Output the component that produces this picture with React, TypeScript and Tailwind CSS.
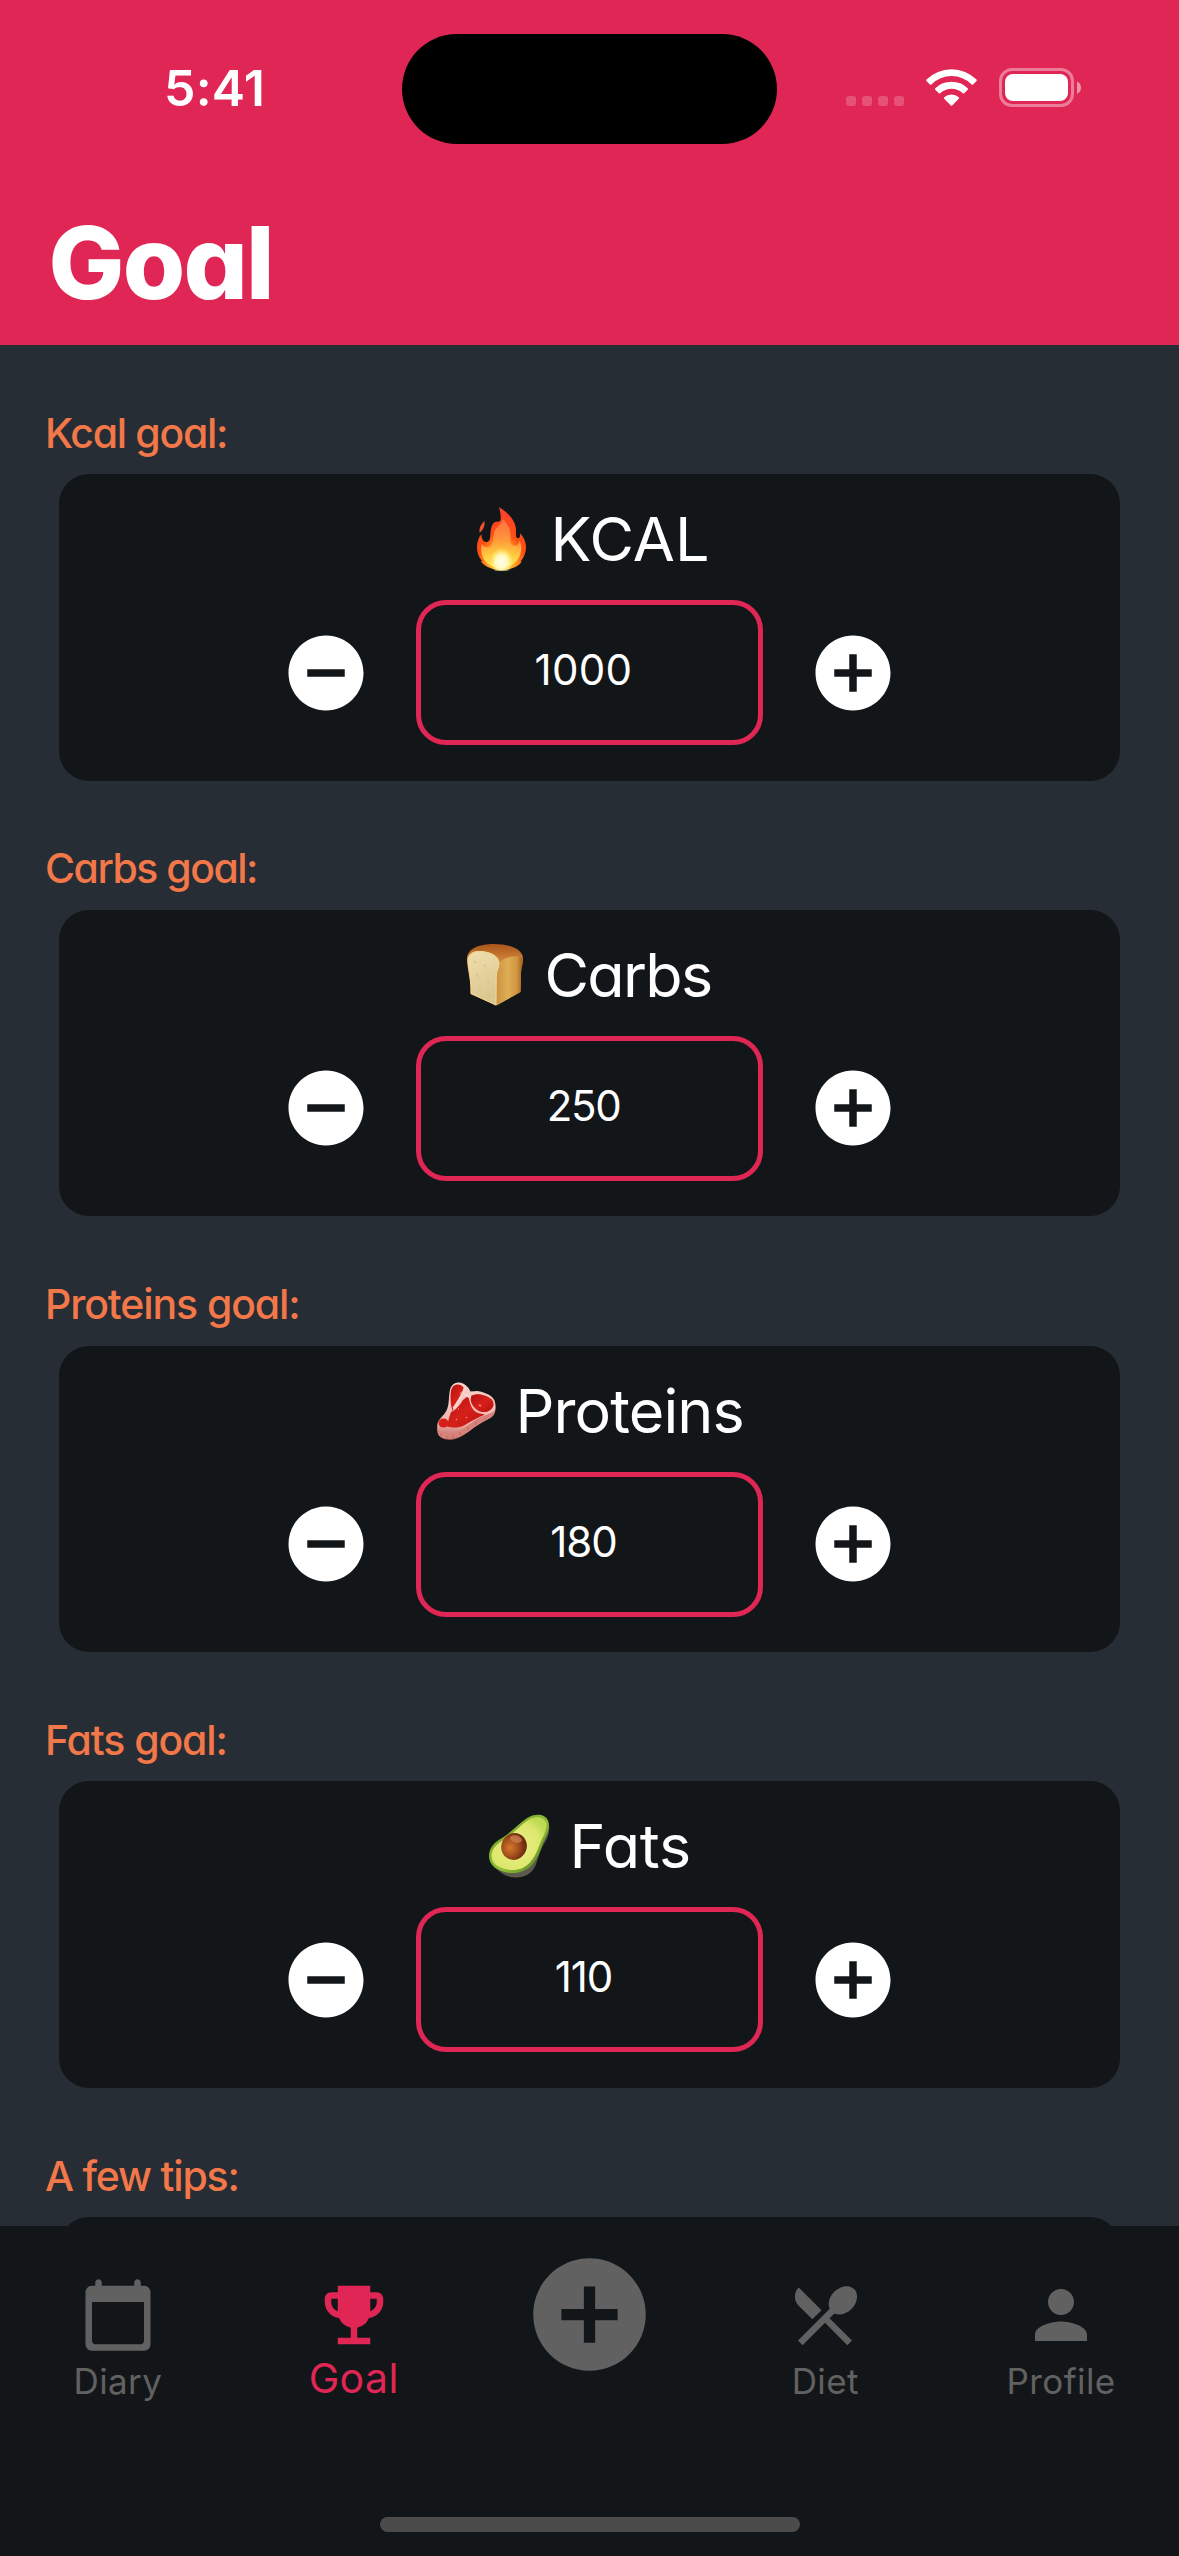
import type { ReactNode } from "react";
import {
  MdAddCircle,
  MdEmojiEvents,
  MdPerson,
  MdRemoveCircle,
  MdRestaurantMenu,
} from "react-icons/md";

const FireIcon = () => (
  <svg viewBox="0 0 64 64" className="size-16 shrink-0">
    <defs>
      <radialGradient id="fireOuter" cx="0.5" cy="0.88" r="0.85">
        <stop offset="0" stopColor="#ffd23a" />
        <stop offset="0.35" stopColor="#ff9a1e" />
        <stop offset="0.55" stopColor="#ff4f14" />
        <stop offset="1" stopColor="#fb3f2c" />
      </radialGradient>
      <linearGradient id="fireInner" x1="0" y1="0" x2="0" y2="1">
        <stop offset="0" stopColor="#ff7a48" />
        <stop offset="0.45" stopColor="#ffa040" />
        <stop offset="0.75" stopColor="#ffd446" />
        <stop offset="1" stopColor="#fff36a" />
      </linearGradient>
      <radialGradient id="fireCore" cx="0.5" cy="0.6" r="0.5">
        <stop offset="0" stopColor="#fffde9" />
        <stop offset="0.5" stopColor="#fffac0" />
        <stop offset="1" stopColor="#fff36a" stopOpacity="0" />
      </radialGradient>
    </defs>
    <path d="M15.500 14c-4 3.500-5.600 7.500-5 11.500 3.500-2 5.500-6.500 5-11.500z" fill="#f4512f" />
    <path
      d="M30 0c8 5 17 13 17 23.500 0 4-.6 7.500 1.800 7.700 2 .2 2.700-2.300 2.200-5.200 3.200 3.500 6 8.500 6 14 0 6-2 10.500-5.500 14.500l1.500.2c-4.500 5.500-12 8.300-20.500 8.300s-16.500-3-21-8.800l1.800 0C9.800 50.500 8 46 8 40.500c0-5 1.200-9.500 4.500-13.500-.2 5 2 8.500 5.200 8 3.600-.6 3.300-4 3.800-9 .5-6 2-11 6-11.200 2-.1 4 .5 4.200-2.800C32 8 31 4 30 0z"
      fill="url(#fireOuter)"
    />
    <path
      d="M34 12c4 5 7.500 9 7.500 16 0 5-.5 9 3 10.500 3 1 5.500-1 6-5 2.500 5 2.500 12-1 17.500-3.500 6-9.500 10-17 10s-14-3-17.500-8.500c-3-5-3.500-11-2-16 1.500 4 6 5 8.500 2.500 4-4 2-10 4.500-15.500 1.500-3.500 6-5 8-11.500z"
      fill="url(#fireInner)"
      opacity="0.85"
    />
    <ellipse cx="32.500" cy="52" rx="12" ry="14" fill="url(#fireCore)" />
  </svg>
);

const BreadIcon = () => (
  <svg viewBox="0 0 64 64" className="size-16 shrink-0">
    <defs>
      <linearGradient id="crustTop" x1="0" y1="0" x2="0" y2="1">
        <stop offset="0" stopColor="#a8541c" />
        <stop offset="0.25" stopColor="#cf8136" />
        <stop offset="1" stopColor="#d78c3c" />
      </linearGradient>
      <linearGradient id="crustSide" x1="0" y1="0" x2="1" y2="0">
        <stop offset="0" stopColor="#c98f3e" />
        <stop offset="0.45" stopColor="#dfae56" />
        <stop offset="0.8" stopColor="#cf9540" />
        <stop offset="1" stopColor="#a75f1d" />
      </linearGradient>
      <linearGradient id="crumb" x1="0" y1="0" x2="0.3" y2="1">
        <stop offset="0" stopColor="#efdeae" />
        <stop offset="1" stopColor="#dac78f" />
      </linearGradient>
    </defs>
    <path
      d="M4 18C3 6 15 1 31 1c14 0 26 4 28.500 11.500C61 20 58 24 58 30l-.5 19L33 62.500 7.500 51C8 38 5 30 4 18z"
      fill="url(#crustTop)"
    />
    <path
      d="M35 20C42 14 52 12 58.500 14 61 20 58 24 58 30l-.5 19L33.500 62.500V36c-2-8-1-11 1.500-16z"
      fill="url(#crustSide)"
    />
    <path
      d="M5 19C4.500 10 11 8 18 8.500c9 .5 17.500 4 18 11.500 .2 5-2.500 7-2.700 13L33 62 8 50.500C8.500 37 6 30 5 19z"
      fill="url(#crumb)"
      stroke="#f3d998"
      strokeWidth="1"
    />
    <path d="M11 18l2 2m8 2l2 1m-9 8l1 3m9 4l2 1m-10 7l2 1m8 4l1 2" stroke="#cdb77a" strokeWidth="1.500" opacity=".6" />
  </svg>
);

const SteakIcon = () => (
  <svg viewBox="0 0 64 64" className="size-16 shrink-0">
    <defs>
      <linearGradient id="fatRim" x1="0" y1="0" x2="0" y2="1">
        <stop offset="0" stopColor="#f9d5cf" />
        <stop offset="0.7" stopColor="#f1b3aa" />
        <stop offset="1" stopColor="#bd6460" />
      </linearGradient>
      <linearGradient id="meat" x1="0" y1="0" x2="1" y2="1">
        <stop offset="0" stopColor="#b5100f" />
        <stop offset="0.5" stopColor="#d6201a" />
        <stop offset="1" stopColor="#b9110f" />
      </linearGradient>
    </defs>
    <path
      d="M16 11c1-5 5-8 9-7.500 5 .5 7 3 9.500 5.500l2 3.500 7-.5c7 1 15 4.500 17 9.500 1.500 4 1.500 9 0 12.500-2.500 5-9 7-14.500 10.500-8 5-13 10.500-22 14.500-7 3-14 2-18-1.500-3.500-3-3-9-2.500-13 1.500-5 6.500-8 9-13C15.500 26 14.500 17 16 11z"
      fill="url(#fatRim)"
    />
    <path
      d="M4 51c6 3 14 5 21 1.500C33 48 41 40 49 37c5-2 10-3 12-6-.5 5-2 7-6.500 9-8 4-16 9-22 13.500C25 59 12 62 5.500 57 3.500 55 3.500 53 4 51z"
      fill="#d8817a"
    />
    <path d="M17 12c1-5 4-7 7.500-6.500 3 .5 4 2 7 4.500l-3 7c-3 6-7 10-10 15-2-6-2.500-14-1.500-20z" fill="url(#meat)" />
    <path d="M17 33c5-2 8-6 12-12l5-4c2 6 3 13 8 16 4 2 7 2 9 2.500-8 3-14 7-21 11-7 3-12 2-17 1 1-5 2-9 4-14.500z" fill="url(#meat)" />
    <path d="M37 17c6-4 16-1 21 3.500 2 3 2.500 7-1 10-3 3-9 3.500-13 1-5-3-8.500-9-7-14.500z" fill="url(#meat)" />
    <ellipse cx="9.500" cy="44" rx="5" ry="4.500" fill="#d5201b" />
    <path d="M31 8c-1 7-6 13-11 21m12-13l4 2" stroke="#f8d6d0" strokeWidth="2.500" fill="none" strokeLinecap="round" />
    <path d="M22 40l1 1m9-3l1 1m-9-9l1 0m20-4l2 1m-21-12l2-2" stroke="#ff8078" strokeWidth="1.500" />
    <path d="M7 55v2m6 0v2m6-3v3m7-6v3m8-8v3m8-8v3m9-7v2" stroke="#ad5954" strokeWidth="1" opacity=".6" />
  </svg>
);

const AvocadoIcon = () => (
  <svg viewBox="0 0 64 64" className="size-16 shrink-0">
    <defs>
      <linearGradient id="avoSkin" x1="0" y1="0" x2="1" y2="0.9">
        <stop offset="0" stopColor="#739b26" />
        <stop offset="0.6" stopColor="#8ebc36" />
        <stop offset="1" stopColor="#557c20" />
      </linearGradient>
      <radialGradient id="avoFlesh" cx="0.45" cy="0.55" r="0.6">
        <stop offset="0" stopColor="#edf08a" />
        <stop offset="0.75" stopColor="#dde76c" />
        <stop offset="1" stopColor="#bfdb55" />
      </radialGradient>
      <radialGradient id="avoPit" cx="0.38" cy="0.6" r="0.62">
        <stop offset="0" stopColor="#d7792c" />
        <stop offset="0.5" stopColor="#a5511f" />
        <stop offset="1" stopColor="#69290f" />
      </radialGradient>
    </defs>
    <path
      d="M8 54c5 6 12 9.500 20 9.500 9 0 16-4 19.500-12 3-8 5-17 10-24 3-5 5-13 3-18C60 6 58 4 56 3L10 48z"
      fill="#5c5a4c"
    />
    <path
      d="M1 42c0-9 6-14 13-18C24 18 32 8 41 3c7-3.500 16-3 19 3.500 2 5 .5 11-2.500 17C53 32 52 42 44 51c-5 5.500-13 8.500-21 8C10 58 1 52 1 42z"
      fill="url(#avoSkin)"
    />
    <path
      d="M3.500 42c0-8 6-12 12-16C26 20 33 10 42 5c6-3 13-2.500 15.500 2.500 2 4 .5 9-2 14.500C51 30 49.500 40 42 48.500 37 54 30 56.500 23 56 11 55 3.500 50 3.500 42z"
      fill="url(#avoFlesh)"
    />
    <ellipse cx="26" cy="32.500" rx="12.700" ry="13.500" transform="rotate(25 26 32.500)" fill="url(#avoPit)" />
    <ellipse cx="28" cy="25" rx="6" ry="3.500" transform="rotate(15 28 25)" fill="#d68e5c" opacity=".65" />
  </svg>
);

const CalendarIcon = () => (
  <svg viewBox="0 0 24 24" className="size-[78px]" fill="currentColor">
    <path d="M20 3h-1V2c0-.55-.45-1-1-1s-1 .45-1 1v1H7V2c0-.55-.45-1-1-1s-1 .45-1 1v1H4c-1.100 0-2 .9-2 2v16c0 1.100.9 2 2 2h16c1.100 0 2-.9 2-2V5c0-1.100-.9-2-2-2zm-1 18H5c-.55 0-1-.45-1-1V8h16v12c0 .55-.45 1-1 1z" />
  </svg>
);

const StatusBar = () => (
  <div className="flex h-[178px] items-start">
    <div className="w-[402px] pt-[58px] pl-[164px] text-[50px] leading-[60px] font-semibold tracking-[0.2px]">
      5:41
    </div>
    <div className="mt-[33.500px] h-[110.500px] w-[375px] rounded-full bg-black" />
    <svg viewBox="0 0 240 42" className="mt-[67px] ml-[67px] h-[42px] w-[240px]">
      <g fill="#fff" fillOpacity="0.2">
        <rect x="2" y="29" width="10" height="10" rx="3" />
        <rect x="18" y="29" width="10" height="10" rx="3" />
        <rect x="34" y="29" width="10" height="10" rx="3" />
        <rect x="50" y="29" width="10" height="10" rx="3" />
      </g>
      <g fill="#fff">
        <path d="M82.500 12.500a35.500 35.500 0 0 1 50 0q.7.800 0 1.500l-3.400 3.400q-.7.700-1.400 0a28.700 28.700 0 0 0-40.400 0q-.7.700-1.400 0l-3.400-3.400q-.7-.7 0-1.500z" />
        <path d="M91.300 21.300a23 23 0 0 1 32.400 0q.7.700 0 1.400l-3.500 3.500q-.7.700-1.400 0a16.300 16.300 0 0 0-22.600 0q-.7.700-1.400 0l-3.500-3.500q-.7-.7 0-1.400z" />
        <path d="M100.200 30.200a11 11 0 0 1 14.600 0q.8.800 0 1.500l-6.600 6.700q-.7.700-1.400 0l-6.600-6.700q-.8-.7 0-1.500z" />
      </g>
      <rect x="156.500" y="2.500" width="72" height="36" rx="11.500" fill="none" stroke="#fff" strokeOpacity="0.4" strokeWidth="3" />
      <rect x="161" y="7" width="63" height="27" rx="8" fill="#fff" />
      <path d="M233 14.500c2.500 1 4 3.500 4 6.200s-1.500 5-4 6.200z" fill="#fff" fillOpacity="0.5" />
    </svg>
  </div>
);

const SectionLabel = ({ children, spacing }: { children: ReactNode; spacing: string }) => (
  <h2 className={`h-[60px] pl-[45px] text-[41px] leading-[60px] font-medium text-[#f27749] ${spacing}`}>{children}</h2>
);

type Goal = {
  label: string;
  labelSpacing: string;
  name: string;
  nameClass: string;
  value: number;
  valueSpacing: string;
  icon: ReactNode;
};

const GOALS: Goal[] = [
  {
    label: "Kcal goal:",
    labelSpacing: "tracking-[-1.3px]",
    name: "KCAL",
    nameClass: "w-[155px]",
    value: 1000,
    valueSpacing: "tracking-[0.3px]",
    icon: <FireIcon />,
  },
  {
    label: "Carbs goal:",
    labelSpacing: "tracking-[-1.5px]",
    name: "Carbs",
    nameClass: "w-[167px] tracking-[-1.700px]",
    value: 250,
    valueSpacing: "tracking-[-1.3px]",
    icon: <BreadIcon />,
  },
  {
    label: "Proteins goal:",
    labelSpacing: "tracking-[-1.1px]",
    name: "Proteins",
    nameClass: "w-[225px] tracking-[-0.9px]",
    value: 180,
    valueSpacing: "tracking-[-1px]",
    icon: <SteakIcon />,
  },
  {
    label: "Fats goal:",
    labelSpacing: "tracking-[-1.1px]",
    name: "Fats",
    nameClass: "w-[117px] tracking-[-0.3px]",
    value: 110,
    valueSpacing: "tracking-[-1px]",
    icon: <AvocadoIcon />,
  },
];

const GoalCard = ({ goal }: { goal: Goal }) => (
  <section className="h-[435.75px] pt-[57.500px]">
    <SectionLabel spacing={goal.labelSpacing}>{goal.label}</SectionLabel>
    <div className="mx-[59px] mt-[11.500px] flex h-[306.500px] flex-col items-center rounded-[30px] bg-[#131619]">
      <div className="flex h-[126px] items-start justify-center gap-[18px] pt-[33px] pr-[5px]">
        {goal.icon}
        <span className={`text-[61px] leading-[64px] whitespace-nowrap ${goal.nameClass}`}>{goal.name}</span>
      </div>
      <div className="flex items-center gap-[45px]">
        <button><MdRemoveCircle className="size-[90px]" /></button>
        <div
          className={`flex h-[145px] w-[347px] items-center justify-center rounded-[30px] border-[5px] border-[#df2655] pr-[12px] pb-[5px] text-[42px] leading-none ${goal.valueSpacing}`}
        >
          {goal.value}
        </div>
        <button><MdAddCircle className="size-[90px]" /></button>
      </div>
    </div>
  </section>
);

const Tab = ({ icon, label }: { icon: ReactNode; label: string }) => (
  <div className="flex flex-1 flex-col items-center pt-[50px]">
    {icon}
    <span className="mt-[3px] text-[35px] leading-[48px] tracking-[0.4px]">{label}</span>
  </div>
);

export default function App() {
  return (
    <div className="flex h-[2556px] w-[1179px] flex-col overflow-hidden bg-[#262d34] font-['Inter',sans-serif] text-white">
      <header className="h-[345px] shrink-0 bg-[#df2655]">
        <StatusBar />
        <h1 className="pt-6 pl-[48.500px] text-[101px] leading-[120px] font-extrabold tracking-[-1.8px] [font-feature-settings:'cv11']">
          Goal
        </h1>
      </header>

      <main className="h-[1881px] shrink-0 overflow-hidden [font-feature-settings:'cv11']">
        {GOALS.map((goal) => (
          <GoalCard key={goal.name} goal={goal} />
        ))}
        <section className="pt-[57.500px]">
          <SectionLabel spacing="tracking-[-1.2px]">A few tips:</SectionLabel>
          <div className="mx-[59px] mt-[11.500px] h-[306px] rounded-[30px] bg-[#131619]" />
        </section>
      </main>

      <nav className="flex h-[291px] shrink-0 bg-[#131619] text-[#616161]">
        <Tab icon={<CalendarIcon />} label="Diary" />
        <div className="flex flex-1 flex-col items-center pt-[50px] text-[#df2655]">
          <MdEmojiEvents className="size-[78px]" />
          <span className="text-[41px] leading-[48px] tracking-[0.4px]">Goal</span>
        </div>
        <div className="flex flex-1 justify-center pt-[21px]">
          <MdAddCircle className="size-[135px]" />
        </div>
        <Tab icon={<MdRestaurantMenu className="size-[78px]" />} label="Diet" />
        <Tab icon={<MdPerson className="size-[78px]" />} label="Profile" />
      </nav>
      <footer className="flex flex-1 justify-center bg-[#131619]">
        <div className="h-[15px] w-[420px] rounded-full bg-[#4b4b4b]" />
      </footer>
    </div>
  );
}
